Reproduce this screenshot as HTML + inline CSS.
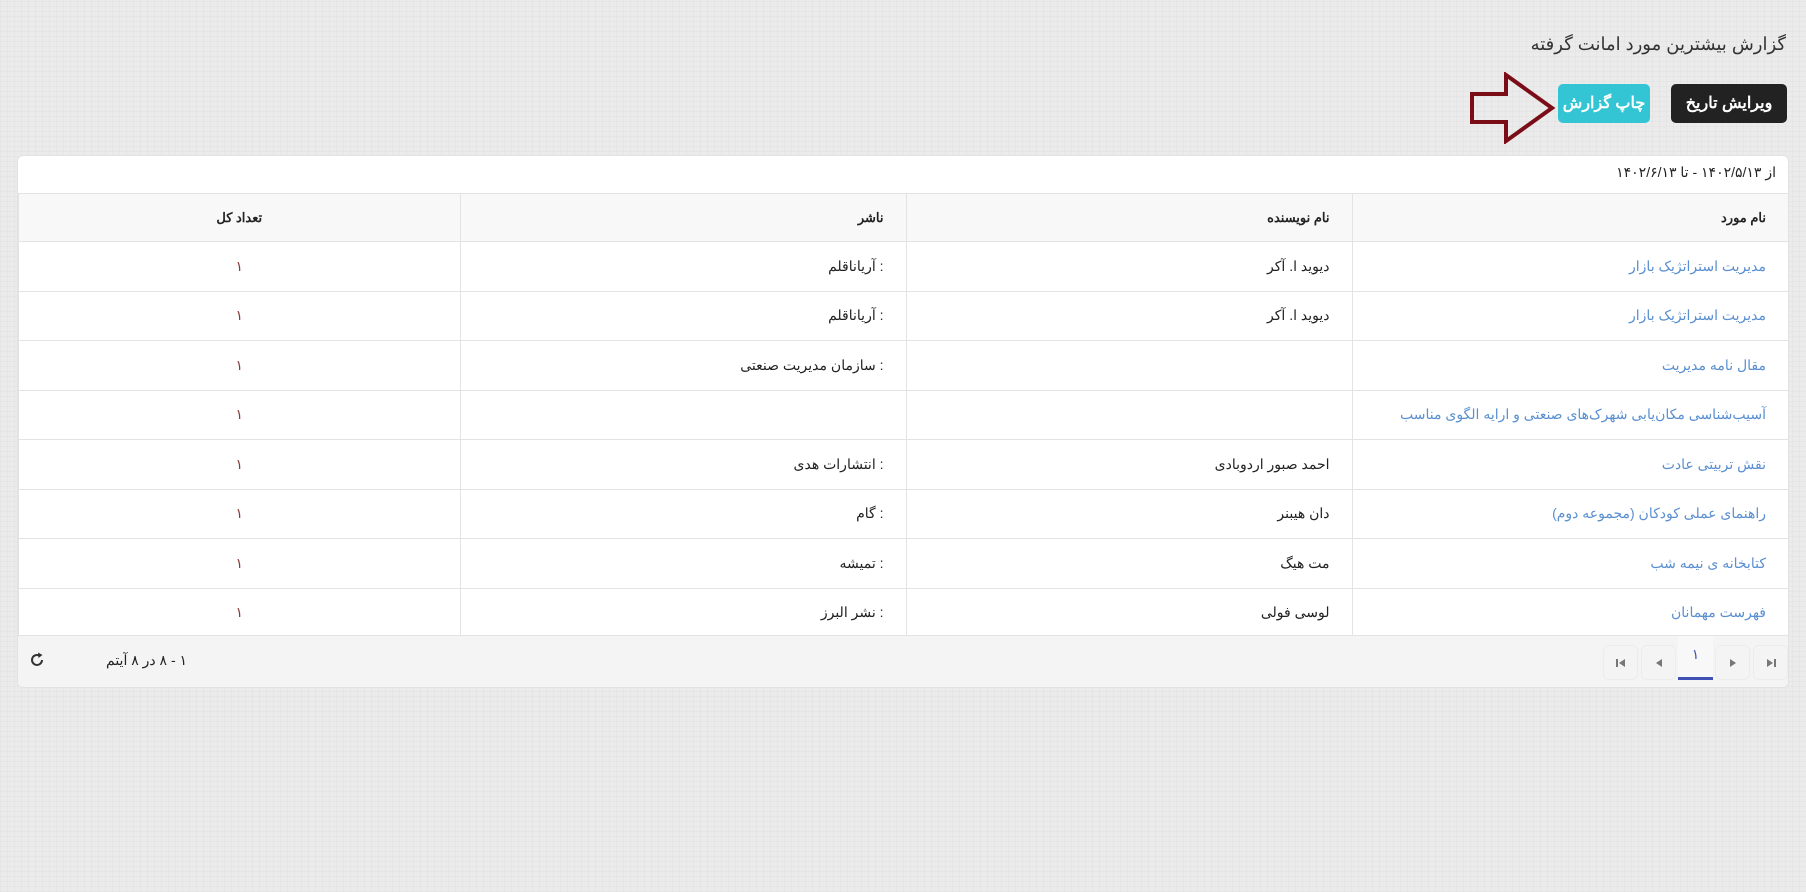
<!DOCTYPE html>
<html dir="rtl"><head><meta charset="utf-8">
<style>
*{box-sizing:border-box;margin:0;padding:0}
body{width:1806px;height:892px;background:#ebebeb;font-family:"Liberation Sans","Noto Sans CJK SC",sans-serif;position:relative;overflow:hidden;color:#222}
.bg{position:absolute;inset:0;background:
repeating-linear-gradient(0deg,rgba(0,0,0,.018) 0 1px,transparent 1px 5px),
repeating-linear-gradient(90deg,rgba(0,0,0,.018) 0 1px,transparent 1px 7px)}
.title{position:absolute;right:20px;top:34px;font-size:18px;color:#333}
.btn{position:absolute;top:84px;height:39px;border-radius:5px;color:#fff;font-size:16px;font-weight:bold;line-height:39px;text-align:center}
.b1{right:19px;width:116px;background:#222}
.b2{right:156px;width:92px;background:#33c5d3}
.card{position:absolute;left:17px;top:155px;width:1772px;height:533px;background:#fff;border:1px solid #e2e2e2;border-radius:6px;overflow:hidden}
.date{position:absolute;right:12px;top:8px;font-size:14px}
table{position:absolute;top:37px;left:0;width:1770px;border-collapse:collapse;font-size:14px}
td,th{border:1px solid #e3e3e3;height:49.5px;text-align:right;padding-right:22px;font-weight:normal}
th{height:48px;background:#f8f8f8;font-weight:bold;color:#222;font-size:13px}
tr td:first-child,tr th:first-child{border-right:none}
td.n{text-align:center;padding:0;color:#8a3a3a}
th.n{text-align:center;padding:0}
td a{color:#5a8fd0;text-decoration:none}
.foot{position:absolute;left:0;right:0;bottom:0;height:52px;background:#f4f4f4;border-top:1px solid #e3e3e3}
.cnt{position:absolute;left:88px;top:16px;font-size:14px}
.pg{position:absolute;top:9px;width:35px;height:35px;border-radius:6px;border:1px solid #ececec}
.pg svg{position:absolute;left:12px;top:12px}
</style></head><body><div class="bg"></div>
<div class="title">گزارش بیشترین مورد امانت گرفته</div>
<div class="btn b1">ویرایش تاریخ</div>
<div class="btn b2">چاپ گزارش</div>
<svg style="position:absolute;left:1468px;top:72px" width="88" height="72" viewBox="0 0 88 72"><path d="M4 22 H38 V3 L84 36 L38 69 V50 H4 Z" fill="none" stroke="#7a0d18" stroke-width="4"/></svg>
<div class="card">
<div class="date">از ۱۴۰۲/۵/۱۳ - تا ۱۴۰۲/۶/۱۳</div>
<table>
<tr><th style="width:436px">نام مورد</th><th style="width:446px">نام نویسنده</th><th style="width:446px">ناشر</th><th class="n">تعداد کل</th></tr>
<tr><td><a>مدیریت استراتژیک بازار</a></td><td>دیوید ا. آکر</td><td>: آریاناقلم</td><td class="n">۱</td></tr>
<tr><td><a>مدیریت استراتژیک بازار</a></td><td>دیوید ا. آکر</td><td>: آریاناقلم</td><td class="n">۱</td></tr>
<tr><td><a>مقال نامه مدیریت</a></td><td></td><td>: سازمان مدیریت صنعتی</td><td class="n">۱</td></tr>
<tr><td><a>آسیب‌شناسی مکان‌یابی شهرک‌های صنعتی و ارایه الگوی مناسب</a></td><td></td><td></td><td class="n">۱</td></tr>
<tr><td><a>نقش تربیتی عادت</a></td><td>احمد صبور اردوبادی</td><td>: انتشارات هدی</td><td class="n">۱</td></tr>
<tr><td><a>راهنمای عملی کودکان (مجموعه دوم)</a></td><td>دان هیبنر</td><td>: گام</td><td class="n">۱</td></tr>
<tr><td><a>کتابخانه ی نیمه شب</a></td><td>مت هیگ</td><td>: تمیشه</td><td class="n">۱</td></tr>
<tr><td><a>فهرست مهمانان</a></td><td>لوسی فولی</td><td>: نشر البرز</td><td class="n">۱</td></tr>
</table>
<div class="foot">
<div class="pg" style="right:0px"><svg width="10" height="10"><path d="M1 1 L7 5 L1 9 Z" fill="#777"/><rect x="8" y="1" width="2" height="8" fill="#777"/></svg></div>
<div class="pg" style="right:38px"><svg width="10" height="10"><path d="M2 1 L8 5 L2 9 Z" fill="#777"/></svg></div>
<div style="position:absolute;right:75px;top:0;width:35px;height:44px;background:#f8f8f8;border-bottom:3px solid #3f51b5;text-align:center;line-height:36px;color:#3f51b5;font-size:14px">۱</div>
<div class="pg" style="right:112px"><svg width="10" height="10"><path d="M8 1 L2 5 L8 9 Z" fill="#777"/></svg></div>
<div class="pg" style="right:150px"><svg width="10" height="10"><rect x="0" y="1" width="2" height="8" fill="#777"/><path d="M9 1 L3 5 L9 9 Z" fill="#777"/></svg></div>
<div class="cnt">۱ - ۸ در ۸ آیتم</div>
<svg style="position:absolute;left:11px;top:16px" width="16" height="16" viewBox="0 0 16 16"><path d="M13 8 A5 5 0 1 1 10 3.4" fill="none" stroke="#333" stroke-width="2"/><path d="M9 0.5 L13.5 3 L9.5 6 Z" fill="#333"/></svg>
</div>
</div>
</body></html>
